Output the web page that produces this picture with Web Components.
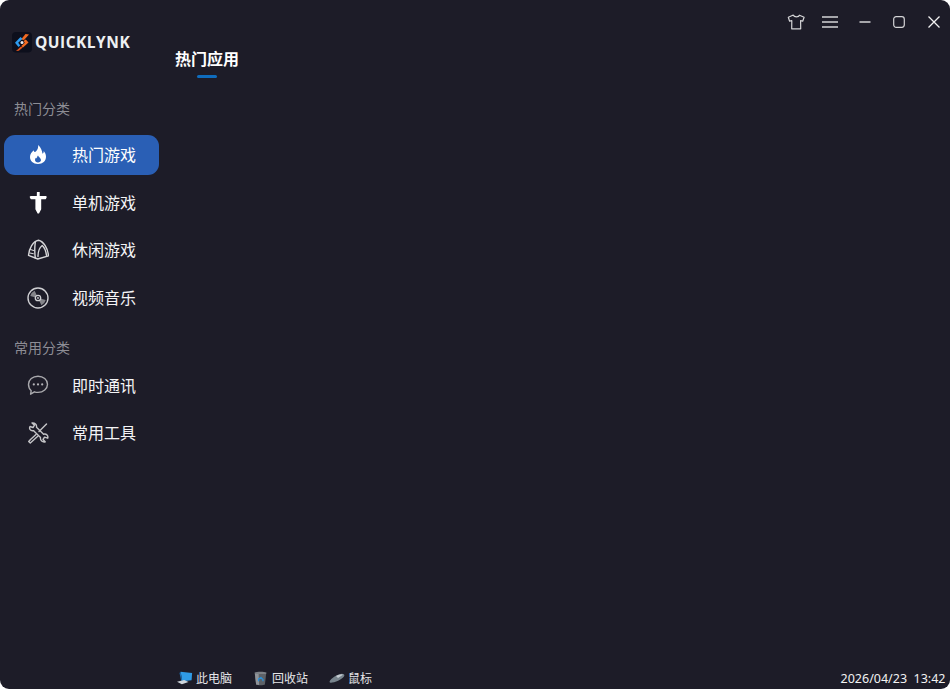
<!DOCTYPE html>
<html lang="zh-CN">
<head>
<meta charset="utf-8">
<title>QuickLynk</title>
<style>
html,body{margin:0;padding:0;height:100%;background:#fff;overflow:hidden}
body{font-family:"Noto Sans CJK SC","Noto Sans",sans-serif}
</style>
</head>
<body>
<app-window>
  <side-bar slot="side">
    <brand-logo></brand-logo>
    <nav-section label="热门分类" style="--label-top:46px;--list-top:17px">
      <nav-item icon="flame" active>热门游戏</nav-item>
      <nav-item icon="sword">单机游戏</nav-item>
      <nav-item icon="tent">休闲游戏</nav-item>
      <nav-item icon="disc">视频音乐</nav-item>
    </nav-section>
    <nav-section label="常用分类" style="--label-top:12.500px;--list-top:9px">
      <nav-item icon="chat">即时通讯</nav-item>
      <nav-item icon="tools">常用工具</nav-item>
    </nav-section>
  </side-bar>
  <main-pane slot="main">
    <window-controls slot="top"></window-controls>
    <tab-title slot="tab">热门应用</tab-title>
    <desktop-bar slot="bottom">
      <desk-link icon="pc">此电脑</desk-link>
      <desk-link icon="bin">回收站</desk-link>
      <desk-link icon="mouse">鼠标</desk-link>
      <span slot="clock">2026/04/23&nbsp;&nbsp;13:42</span>
    </desktop-bar>
  </main-pane>
</app-window>
<script>
const ICONS={
flame:'<path fill="#fff" fill-rule="evenodd" d="M11 1c.6 2.700-.3 4.300-1.700 6C7.700 8.800 6.800 7.600 6.800 6.200 4.600 8 3 10.300 3 13c0 4 3.300 7 8 7s8-3 8-7.200c0-2.500-1-4.400-2.300-5.800.1 1.300-.3 2.300-1.200 2.800C15 6.500 13.800 3 11 1zM11 11.500c.3 1.500 3 2.500 3 4.500 0 1.500-1.400 2.500-3 2.500s-3-1-3-2.500c0-1 .5-1.800 1.200-2.400.1.500.4.800.8.900-.1-1.100.4-2.300 1-3z"/>',
sword:'<path fill="#fff" d="M9.900 0h2.800v3.900h6c.9 0 1.300.8.900 1.500l-.6 1.300c-.2.400-.6.600-1 .6h-3.800v9.900L12 21.500h-1.400L8.400 17.200V7.300H4.500c-.4 0-.8-.2-1-.6l-.6-1.300c-.4-.7 0-1.500.9-1.500h6z"/>',
tent:'<g fill="none" stroke="#d6d6d8" stroke-width="1.400" stroke-linejoin="round" stroke-linecap="round"><path d="M1.500 16.300C2 9.500 6 2.200 11.500 1.200 16.500 2.200 21 9.500 21.500 16.800L10.800 20z"/><path d="M8.300 3.500C7.600 8 7.600 13.500 8.300 18.800"/><path d="M11 17.500c0-4.800 1.500-9 4.200-11 2.500 2.200 3.800 6 4.300 9.800"/><path d="M3.500 10.500 6.500 11.500M3 14l3.300.8" stroke-width="1.100"/></g>',
disc:'<circle cx="11" cy="11" r="10" fill="none" stroke="#cfcfd2" stroke-width="1.400"/><path fill="#85858a" d="M7.620 3.750A8 8 0 0 0 3.270 8.930L7.910 10.170A3.200 3.200 0 0 1 9.650 8.100zM14.380 18.250A8 8 0 0 0 18.730 13.070L14.090 11.830A3.200 3.200 0 0 1 12.350 13.900z"/><circle cx="11" cy="11" r="2.700" fill="none" stroke="#cfcfd2" stroke-width="1.300"/><circle cx="11" cy="11" r=".9" fill="#cfcfd2"/>',
chat:'<path fill="none" stroke="#a9a9ad" stroke-width="1.400" stroke-linejoin="round" d="M11 1.200c5.300 0 9.500 3.600 9.500 8.100s-4.200 8.100-9.500 8.100c-1.300 0-2.500-.2-3.600-.6L3.600 19.200l.6-3.500C2.500 14.200 1.500 11.900 1.500 9.300 1.500 4.800 5.700 1.200 11 1.200z"/><g fill="#b4b4b8"><circle cx="6.800" cy="9.400" r="1.100"/><circle cx="11" cy="9.400" r="1.100"/><circle cx="15.200" cy="9.400" r="1.100"/></g>',
tools:'<g fill="none" stroke="#c4c4c7" stroke-width="1.400" stroke-linejoin="round" stroke-linecap="round"><path d="M5 1 7.500 3.200 6 5.500 3 4.500C1.800 6.800 3.500 9.200 6.400 8.600L13.500 15.500C13 18.500 15.500 20.500 18.200 19.800L16 17.500 17.500 15.200l3.200 1C21.500 13.800 19.500 11.500 16.600 12.200L9.500 5.300C10 2.800 7.800.6 5 1z"/><path d="M19.500 2 12 9.500"/><path d="M9 12.500 3.500 17.500 1.700 19.500 3.300 21 8 16.800l2.800-2.600"/></g>'
};
const DESK={
pc:'<svg width="16" height="14" viewBox="0 0 18 15.500"><path fill="#2f9be6" d="M4 .8 17 2l-.6 8.400L6 11.500z"/><path fill="#1b6fb5" d="M4 .8 6 11.500l-1.200-.4L2.800 2z"/><path fill="#cfd6dc" d="M0 12 8 10l5 2.300-7.500 2.500z"/></svg>',
bin:'<svg width="15" height="15" viewBox="0 0 16 16"><path fill="#7c8086" d="M1.500 1.800C4 .6 12 .6 14.500 1.800l-.7 1.600H2.200z"/><path fill="#5d6167" d="M2 3.200h12l-1.300 11.300c-1 1-8.400 1-9.400 0z"/><path fill="#8f9399" d="M2 3.200h4l.5 11.800-3.200-.5z"/><path fill="none" stroke="#2b8fd8" stroke-width="1.400" d="M6 11V8.500l2.500-1.400L10.600 9v2"/></svg>',
mouse:'<svg width="16" height="10" viewBox="0 0 16 10"><path fill="#78848d" d="M.6 8.400C2 5.200 7.600 1.500 12.300.9c2.200-.2 3.400.8 3 1.800C14.400 5 8.500 8.800 3.200 9.600 1.400 9.800.3 9.300.6 8.400z"/><path fill="#c5ccd2" d="M7 3c1.800-1 4-1.700 5.600-1.700 1 0 1.300.5.600 1L9 5.100z"/></svg>'
};
function tpl(css,html){const t=document.createElement('template');t.innerHTML='<style>'+css+'</style>'+html;return t;}
class Base extends HTMLElement{
  constructor(){super();this.attachShadow({mode:'open'}).appendChild(this.constructor.t.content.cloneNode(true));}
}
class AppWindow extends Base{static t=tpl(
`:host{display:grid;grid-template-columns:163px 1fr;width:950px;height:689px;background:#1d1c28;border-radius:9px;overflow:hidden;color:#fff;font-family:"Noto Sans CJK SC","Noto Sans",sans-serif}`,
`<slot name="side"></slot><slot name="main"></slot>`)}
class SideBar extends Base{static t=tpl(
`:host{display:flex;flex-direction:column;min-width:0}`,`<slot></slot>`)}
class BrandLogo extends Base{static t=tpl(
`:host{display:flex;align-items:center;gap:3px;height:21px;margin:32px 0 0 12px}
svg{flex:none;display:block}
span{font:700 15.500px/21px "Open Sans","Liberation Sans",sans-serif;color:#eef0f2;letter-spacing:.5px}`,
`<svg width="20" height="21" viewBox="0 0 20 21"><rect width="20" height="20.500" rx="4" fill="#0d0f1c"/>
<path fill="#f26a21" d="M13.500 2 17 2.500 12 8l-3-.5z"/><path fill="#2d9cf0" d="M8.500 5 3 10.800l3.500 4.200 1.700-1.500-2-2.700 4.300-4z"/>
<path fill="#f26a21" d="M13.800 7.500 16.500 10.500 11 15.500l-1.700-1.500 3.500-3.300-1.300-1.700z"/><path fill="#e3541a" d="M9 14.500 4 19l2.800-.2 4-3.300z"/>
<circle cx="10" cy="10.500" r="1.500" fill="#e8eef4"/></svg><span>QUICKLYNK</span>`)}
class NavSection extends Base{static t=tpl(
`:host{display:block}
.l{display:block;margin:var(--label-top) 0 0 14px;font-size:14px;line-height:19px;color:#8d8d95}
.i{display:flex;flex-direction:column;margin-top:var(--list-top)}`,
`<span class="l"></span><div class="i"><slot></slot></div>`);
  connectedCallback(){this.shadowRoot.querySelector('.l').textContent=this.getAttribute('label');}}
class NavItem extends Base{static t=tpl(
`:host{display:flex;align-items:center;height:40px;margin:0 4px 7.500px;border-radius:11px;font-size:16px;color:#f4f4f6}
:host([active]){background:#2a5fb5;color:#fff}
.ic{flex:none;width:22px;height:22px;margin-left:23px;display:block}
.t{margin:0 0 2px 23px;line-height:38px}`,
`<svg class="ic" viewBox="0 0 22 22"></svg><span class="t"><slot></slot></span>`);
  connectedCallback(){this.shadowRoot.querySelector('svg').innerHTML=ICONS[this.getAttribute('icon')];}}
class MainPane extends Base{static t=tpl(
`:host{display:flex;flex-direction:column;min-width:0;min-height:0}
.g{flex:1}`,
`<slot name="top"></slot><slot name="tab"></slot><div class="g"></div><slot name="bottom"></slot>`)}
class WindowControls extends Base{static t=tpl(
`:host{display:flex;justify-content:flex-end;align-items:center;gap:0;height:22px;margin-top:11px;padding-right:9px}
svg{display:block;flex:none;fill:none;stroke:#d4d4d6}`,
`<svg width="20" height="20" viewBox="0 0 20 20" style="margin-right:16px"><path stroke-width="1.200" stroke-linejoin="round" d="M6.800 3.200 2.300 5.200l1.300 4 2.200-.6-.1 8.200h9l-.1-8.200 2.100.6 1.400-4-4.600-2c-.7 2.100-5.400 2.100-6.100 0z"/></svg>
<svg width="16" height="12" viewBox="0 0 16 12" style="margin-right:21px" stroke-width="1.300"><path d="M0 1h16M0 6h16M0 11h16"/></svg>
<svg width="12" height="12" viewBox="0 0 12 12" style="margin-right:22px" stroke-width="1.300"><path d="M.5 6h11"/></svg>
<svg width="12" height="12" viewBox="0 0 12 12" style="margin-right:22px" stroke-width="1.200"><rect x=".7" y=".7" width="10.600" height="10.600" rx="2.500"/></svg>
<svg width="14" height="14" viewBox="0 0 14 14" style="stroke:#f2f2f2" stroke-width="1.300"><path d="m1.500 1.500 11 11M12.500 1.500l-11 11"/></svg>`)}
class TabTitle extends Base{static t=tpl(
`:host{display:flex;flex-direction:column;align-items:center;align-self:flex-start;margin:13px 0 0 12px;font-size:16px;font-weight:700;line-height:24px;color:#fff}
i{display:block;width:20px;height:3px;margin-top:5px;border-radius:1.500px;background:#0f6cbd}`,
`<span><slot></slot></span><i></i>`)}
class DesktopBar extends Base{static t=tpl(
`:host{display:flex;align-items:center;height:20px;margin-bottom:1px;padding:0 4.500px 0 14px;font-size:12px;color:#e6e6e8}
.c{margin-left:auto;font-family:"Noto Sans","Liberation Sans",sans-serif;font-size:12.500px;color:#f2f2f2}
.l{display:flex;gap:21px;align-items:center}`,
`<div class="l"><slot></slot></div><div class="c"><slot name="clock"></slot></div>`)}
class DeskLink extends Base{static t=tpl(
`:host{display:flex;align-items:center;gap:3px;line-height:18px}
.b{width:16px;height:18px;display:flex;align-items:center;justify-content:flex-start}`,
`<span class="b"></span><span><slot></slot></span>`);
  connectedCallback(){this.shadowRoot.querySelector('.b').innerHTML=DESK[this.getAttribute('icon')];}}
const defs={'app-window':AppWindow,'side-bar':SideBar,'brand-logo':BrandLogo,'nav-section':NavSection,'nav-item':NavItem,'main-pane':MainPane,'window-controls':WindowControls,'tab-title':TabTitle,'desktop-bar':DesktopBar,'desk-link':DeskLink};
for(const k in defs)customElements.define(k,defs[k]);
</script>
</body>
</html>
